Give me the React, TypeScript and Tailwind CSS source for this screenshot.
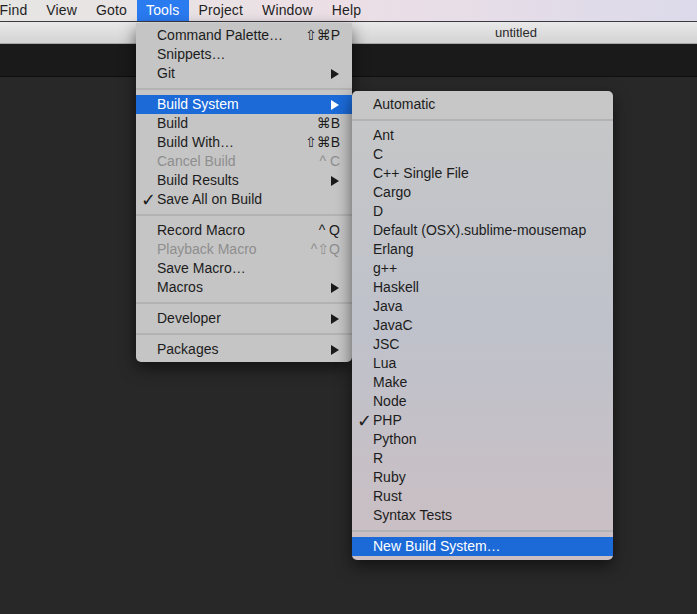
import React from "react";

type Item =
  | { sep: true }
  | {
      sep?: false;
      label: string;
      shortcut?: string;
      sub?: boolean;
      check?: boolean;
      disabled?: boolean;
      active?: boolean;
    };

const toolsMenu: Item[] = [
  { label: "Command Palette…", shortcut: "⇧⌘P" },
  { label: "Snippets…" },
  { label: "Git", sub: true },
  { sep: true },
  { label: "Build System", sub: true, active: true },
  { label: "Build", shortcut: "⌘B" },
  { label: "Build With…", shortcut: "⇧⌘B" },
  { label: "Cancel Build", shortcut: "^ C", disabled: true },
  { label: "Build Results", sub: true },
  { label: "Save All on Build", check: true },
  { sep: true },
  { label: "Record Macro", shortcut: "^ Q" },
  { label: "Playback Macro", shortcut: "^⇧Q", disabled: true },
  { label: "Save Macro…" },
  { label: "Macros", sub: true },
  { sep: true },
  { label: "Developer", sub: true },
  { sep: true },
  { label: "Packages", sub: true },
];

const buildSystems = [
  "Ant",
  "C",
  "C++ Single File",
  "Cargo",
  "D",
  "Default (OSX).sublime-mousemap",
  "Erlang",
  "g++",
  "Haskell",
  "Java",
  "JavaC",
  "JSC",
  "Lua",
  "Make",
  "Node",
  "PHP",
  "Python",
  "R",
  "Ruby",
  "Rust",
  "Syntax Tests",
];

const subMenu: Item[] = [
  { label: "Automatic" },
  { sep: true },
  ...buildSystems.map((b) => ({ label: b, check: b === "PHP" })),
  { sep: true },
  { label: "New Build System…", active: true },
];

function Arrow({ white }: { white?: boolean }) {
  return (
    <svg width="8" height="10" viewBox="0 0 8 10" className="ml-auto mr-[1px] shrink-0">
      <path d="M0 0 L8 5 L0 10 Z" fill={white ? "#ffffff" : "#1a1a1a"} />
    </svg>
  );
}

function MenuRow({ item }: { item: Item }) {
  if (item.sep) {
    return (
      <div className="flex h-[12px] items-center">
        <div className="h-[2px] w-full bg-[#b3b3b3]" />
      </div>
    );
  }
  const color = item.active
    ? "text-white"
    : item.disabled
      ? "text-[#8e8e8e]"
      : "text-[#1c1c1c]";
  return (
    <div
      className={`flex h-[19px] items-center pl-[5px] pr-[12px] ${color} ${
        item.active ? "bg-[#1b6ad8]" : ""
      }`}
    >
      <span className="w-[16px] shrink-0 text-[18px] font-bold leading-none">
        {item.check ? "✓" : ""}
      </span>
      <span className="shrink-0 whitespace-nowrap">{item.label}</span>
      {item.shortcut && (
        <span className="ml-auto whitespace-nowrap pl-3">{item.shortcut}</span>
      )}
      {item.sub && <Arrow white={item.active} />}
    </div>
  );
}

export default function App() {
  const font = "font-['Liberation_Sans','DejaVu_Sans',sans-serif]";
  const topItems = ["Find", "View", "Goto", "Tools", "Project", "Window", "Help"];
  return (
    <div
      className={`relative h-[614px] w-[697px] overflow-hidden bg-[#282828] text-[14px] ${font}`}
    >
      {/* menu bar */}
      <div className="flex h-[22px] items-center border-b border-[#3a3a40] bg-gradient-to-r from-[#e6e6e3] via-[#ecdfe6] to-[#dcdaea] text-[#1f1f1f]">
        <div className="ml-[-10px] flex h-full">
          {topItems.map((t) => (
            <div
              key={t}
              className={`flex h-full items-center px-[9.5px] tracking-[0.15px] ${
                t === "Tools" ? "bg-[#2a7af0] text-white" : ""
              }`}
            >
              {t}
            </div>
          ))}
        </div>
      </div>

      {/* title bar */}
      <div className="flex h-[22px] items-center justify-center border-b border-[#a9a9a9] bg-gradient-to-b from-[#e9e9e9] to-[#d3d3d3] pl-[335px] text-[13px] text-[#2a2a2a]">
        untitled
      </div>

      {/* tab bar */}
      <div className="h-[33px] border-b border-[#0e0e0e] bg-[#1a1a1a]" />

      {/* Tools menu */}
      <div className="absolute left-[136px] top-[23px] w-[216px] rounded-b-[5px] bg-[#c5c5c5] pb-[3px] pt-[3px] shadow-[0_6px_16px_rgba(0,0,0,0.55)]">
        {toolsMenu.map((it, i) => (
          <MenuRow key={i} item={it} />
        ))}
      </div>

      {/* Build System submenu */}
      <div className="absolute left-[352px] top-[91px] w-[261px] overflow-hidden rounded-[5px] bg-gradient-to-b from-[#c7c7c7] via-[#bfc2cb] to-[#cbbfc3] pb-[4px] pt-[4px] shadow-[0_6px_16px_rgba(0,0,0,0.55)]">
        {subMenu.map((it, i) => (
          <MenuRow key={i} item={it} />
        ))}
      </div>
    </div>
  );
}
